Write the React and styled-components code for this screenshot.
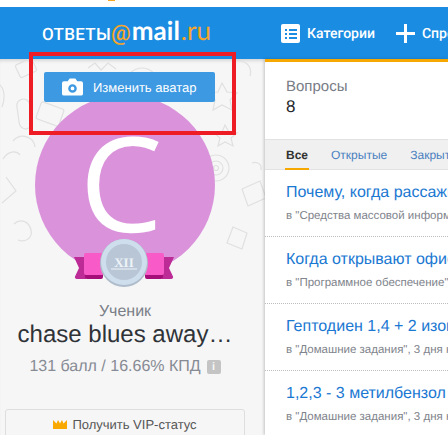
import React from "react";
import styled, { createGlobalStyle } from "styled-components";

const GlobalStyle = createGlobalStyle`
  html, body {
    margin: 0;
    padding: 0;
    background: #fff;
    overflow: hidden;
  }
  body {
    font-family: "Liberation Sans", Arial, sans-serif;
    text-rendering: geometricPrecision;
  }
`;

const questions = [
  { title: "Почему, когда рассаживают", meta: 'в "Средства массовой информации"' },
  { title: "Когда открывают офис", meta: 'в "Программное обеспечение", 3 дня' },
  { title: "Гептодиен 1,4 + 2 изомера", meta: 'в "Домашние задания", 3 дня назад' },
  { title: "1,2,3 - 3 метилбензол", meta: 'в "Домашние задания", 3 дня назад' },
];

function Doodles() {
  return (
    <DoodleLayer viewBox="0 0 265 376" fill="none" stroke="#e0e0e0" strokeWidth="1.2">
      <rect x="17" y="2" width="18" height="14" rx="2" transform="rotate(-25 26 9)" />
      <path d="M88 9l7-5 6 7 7-7 8 6" />
      <circle cx="142" cy="25" r="16" />
      <circle cx="142" cy="25" r="7" />
      <path d="M-3 24c7 3 9 13 5 24" />
      <rect x="18" y="40" width="13" height="30" rx="6.5" transform="rotate(-8 24 55)" />
      <rect x="38" y="46" width="24" height="18" rx="2" transform="rotate(20 50 55)" />
      <path d="M222 24l5 9 10 1-7 7 2 10-10-5-9 5 2-10-7-7 10-1z" />
      <path d="M225 66l4 7 8 1-6 5 2 8-8-4-7 4 2-8-6-5 8-1z" />
      <path d="M233 3c10-4 20 3 17 14" />
      <path d="M13 82c8-9 21-4 22 6M3 100c5-8 13-9 17-4" />
      <circle cx="216" cy="109" r="13" />
      <circle cx="216" cy="109" r="7" />
      <circle cx="216" cy="109" r="2.5" />
      <path d="M6 118l10 14-14 12" />
      <path d="M242 130l18-8 6 17-18 8z" />
      <path d="M252 104c6-2 10 2 9 7" />
      <path d="M14 165c6-6 15-3 17 6 2 8-6 13-13 10" />
      <path d="M233 168l14 6-5 16-15-6z" />
    </DoodleLayer>
  );
}

function Medal() {
  return (
    <MedalSvg viewBox="0 0 100 36" width="100" height="36">
      <path d="M0 5h12v22H3c-1.500 0-2.500-1-2-2.500L5 16z" fill="#bc2b96" />
      <path d="M100 5H88v22h9c1.500 0 2.500-1 2-2.500L95 16z" fill="#bc2b96" />
      <rect x="11" y="18" width="18" height="9" rx="2" fill="#a50e78" />
      <rect x="71" y="18" width="18" height="9" rx="2" fill="#a50e78" />
      <rect x="10" y="1" width="20" height="22" rx="2" fill="#f85bc7" />
      <rect x="70" y="1" width="20" height="22" rx="2" fill="#f85bc7" />
      <circle cx="50" cy="11" r="24" fill="#aebccc" />
      <circle cx="50" cy="10" r="23" fill="#cfdeec" />
      <circle cx="50" cy="10" r="18" fill="#b8c6d6" />
      <text x="50" y="15" textAnchor="middle" fontSize="13" fontWeight="700" fontFamily="Liberation Serif, serif" fill="#eef3f8">XII</text>
      <path d="M37 17h26" stroke="#eef3f8" strokeWidth="1" />
    </MedalSvg>
  );
}

export default function App() {
  return (
    <Page>
      <GlobalStyle />
      <TopStrip>
        <TopMark />
      </TopStrip>
      <Header>
        <Logo>
          <LogoWord>ОТВЕТЫ</LogoWord>
          <LogoAt>@</LogoAt>
          <LogoMail>mail</LogoMail>
          <LogoRu>.ru</LogoRu>
        </Logo>
        <NavItem>
          <svg width="19" height="19" viewBox="0 0 19 19">
            <rect width="19" height="19" rx="2" fill="#fff" />
            <path d="M4 5h2v2H4zM8 5h8v2H8zM4 9h2v2H4zM8 9h8v2H8zM4 13h2v2H4zM8 13h8v2H8z" fill="#1a8ce2" />
          </svg>
          <NavLabel>Категории</NavLabel>
        </NavItem>
        <NavItem>
          <svg width="19" height="19" viewBox="0 0 19 19">
            <path d="M8 0h3v8h8v3h-8v8H8v-8H0V8h8z" fill="#fff" />
          </svg>
          <NavLabel>Спросить</NavLabel>
        </NavItem>
      </Header>
      <Main>
        <Sidebar>
          <Doodles />
          <Avatar>
            <AvatarLetter>C</AvatarLetter>
            <Medal />
          </Avatar>
          <ChangeButton>
            <svg width="21" height="18" viewBox="0 0 22 18">
              <path
                fillRule="evenodd"
                d="M2 3h4l2-3h6l2 3h4a2 2 0 0 1 2 2v11a2 2 0 0 1-2 2H2a2 2 0 0 1-2-2V5a2 2 0 0 1 2-2zm9 3a4.500 4.500 0 1 0 0 9 4.500 4.500 0 0 0 0-9zm0 2.500a2 2 0 1 1 0 4 2 2 0 0 1 0-4z"
                fill="#fff"
              />
            </svg>
            Изменить аватар
          </ChangeButton>
          <Rank>Ученик</Rank>
          <UserName>chase blues away…</UserName>
          <Stats>
            131 балл / 16.66% КПД
            <InfoBadge>i</InfoBadge>
          </Stats>
          <VipBox>
            <svg width="14" height="10" viewBox="0 0 14 9" preserveAspectRatio="none">
              <path d="M0 1l3.500 3L5 1l2 3 2-3 1.500 3L14 1v8H0z" fill="#f9a800" />
            </svg>
            Получить VIP-статус
          </VipBox>
        </Sidebar>
        <Content>
          <Summary>
            <SummaryLabel>Вопросы</SummaryLabel>
            <SummaryValue>8</SummaryValue>
          </Summary>
          <Tabs>
            <Tab $active>Все</Tab>
            <Tab>Открытые</Tab>
            <Tab>Закрытые</Tab>
          </Tabs>
          <List>
            {questions.map((q) => (
              <Question key={q.title}>
                <QuestionTitle>{q.title}</QuestionTitle>
                <QuestionMeta>{q.meta}</QuestionMeta>
              </Question>
            ))}
          </List>
        </Content>
      </Main>
      <Annotation />
    </Page>
  );
}

const Page = styled.div`
  position: relative;
  width: 448px;
  height: 435px;
  overflow: hidden;
  background: #fff;
`;

const TopStrip = styled.div`
  height: 7px;
  background: #fff;
`;

const TopMark = styled.div`
  width: 7px;
  height: 1px;
  margin-left: 108px;
  background: #f5a623;
`;

const Header = styled.header`
  display: flex;
  align-items: center;
  height: 52px;
  padding-left: 42px;
  background: #1a8ce2;
  color: #fff;
  white-space: nowrap;
`;

const Logo = styled.div`
  display: flex;
  align-items: baseline;
  flex: none;
  width: 239px;
  margin-top: -1px;
  font-family: "Roboto", sans-serif;
`;

const LogoWord = styled.span`
  font-size: 17px;
  font-weight: 500;
  letter-spacing: 0.3px;
`;

const LogoAt = styled.span`
  font-size: 22px;
  line-height: 20px;
  font-weight: 500;
  color: #f6a52b;
`;

const LogoMail = styled.span`
  margin-left: 1px;
  font-family: "Lato", sans-serif;
  font-size: 26px;
  line-height: 20px;
  font-weight: 700;
`;

const LogoRu = styled.span`
  margin-left: 1px;
  font-family: "Lato", sans-serif;
  font-size: 26px;
  line-height: 20px;
  color: #f6a52b;
`;

const NavItem = styled.div`
  display: flex;
  align-items: center;
  gap: 7px;
  margin-right: 21px;
  font-family: "Roboto", sans-serif;
  font-size: 14px;
  font-weight: 500;
`;

const NavLabel = styled.span`
  padding-top: 2px;
`;

const Main = styled.div`
  display: flex;
  height: 376px;
`;

const Sidebar = styled.aside`
  position: relative;
  display: flex;
  flex-direction: column;
  align-items: center;
  flex: none;
  box-sizing: border-box;
  width: 265px;
  padding: 36px 15px 0 0;
  overflow: hidden;
  background: #f6f6f6;
  box-shadow: inset 0 4px 4px -3px rgba(0, 0, 0, 0.18);
`;

const DoodleLayer = styled.svg`
  position: absolute;
  top: 0;
  left: 0;
  width: 265px;
  height: 376px;
`;

const Avatar = styled.div`
  position: relative;
  flex: none;
  display: flex;
  justify-content: center;
  width: 180px;
  height: 180px;
  border-radius: 50%;
  background: #da93db;
`;

const AvatarLetter = styled.span`
  margin-right: 8px;
  color: #fff;
  font-family: "Open Sans", sans-serif;
  font-size: 132px;
  line-height: 172px;
`;

const MedalSvg = styled.svg`
  position: absolute;
  top: 157px;
  left: 39px;
  overflow: visible;
`;

const ChangeButton = styled.div`
  position: absolute;
  top: 13px;
  left: 44px;
  display: flex;
  align-items: center;
  gap: 10px;
  box-sizing: border-box;
  width: 171px;
  height: 30px;
  padding-left: 18px;
  border-radius: 2px;
  background: #3c99e2;
  color: #fff;
  font-size: 13px;
`;

const Rank = styled.div`
  margin-top: 28px;
  color: #7a7f87;
  font-size: 16px;
  line-height: 18px;
`;

const UserName = styled.div`
  color: #2f3338;
  font-size: 24px;
  line-height: 28px;
  white-space: nowrap;
`;

const Stats = styled.div`
  display: flex;
  align-items: center;
  gap: 6px;
  margin-top: 9px;
  color: #868b94;
  font-size: 16px;
  line-height: 18px;
`;

const InfoBadge = styled.span`
  width: 14px;
  height: 14px;
  border-radius: 2px;
  background: #c4c4c4;
  color: #f6f6f6;
  font-size: 11px;
  font-weight: 700;
  line-height: 14px;
  text-align: center;
`;

const VipBox = styled.div`
  display: flex;
  align-items: center;
  justify-content: center;
  gap: 5px;
  flex: none;
  box-sizing: border-box;
  width: 240px;
  height: 40px;
  margin-top: 33px;
  padding-bottom: 10px;
  border: 1px solid #dedede;
  border-radius: 3px;
  color: #555;
  font-size: 13px;
`;

const Content = styled.main`
  flex: 1;
  min-width: 0;
  overflow: hidden;
  border-top: 3px solid #f7a800;
  background: #fff;
  box-shadow: -1px 0 3px rgba(0, 0, 0, 0.2);
  z-index: 1;
`;

const Summary = styled.section`
  box-sizing: border-box;
  height: 77px;
  padding: 17px 21px 0;
`;

const SummaryLabel = styled.div`
  color: #777c85;
  font-size: 15px;
  line-height: 16px;
`;

const SummaryValue = styled.div`
  margin-top: 2px;
  color: #26292e;
  font-size: 17px;
  line-height: 20px;
`;

const Tabs = styled.nav`
  display: flex;
  gap: 21px;
  box-sizing: border-box;
  height: 31px;
  padding-left: 20px;
  border-top: 1px solid #e2e2e2;
  border-bottom: 1px solid #e2e2e2;
  background: #f0f0f0;
  white-space: nowrap;
`;

const Tab = styled.span`
  box-sizing: border-box;
  height: 30px;
  padding: 8px 1px 0;
  border-bottom: ${(p) => (p.$active ? "2px solid #f7a800" : "none")};
  color: ${(p) => (p.$active ? "#333" : "#4a80c0")};
  font-size: 12px;
  font-weight: ${(p) => (p.$active ? 700 : 400)};
`;

const List = styled.div`
  display: flex;
  flex-direction: column;
`;

const Question = styled.article`
  box-sizing: border-box;
  height: 67px;
  padding: 13px 21px 0;
  border-bottom: 1px dotted #bdbdbd;
  white-space: nowrap;
  &:last-child {
    border-bottom: none;
  }
`;

const QuestionTitle = styled.div`
  color: #1a78d2;
  font-size: 16px;
  line-height: 20px;
`;

const QuestionMeta = styled.div`
  margin-top: 7px;
  color: #80848c;
  font-size: 11.5px;
  line-height: 13px;
`;

const Annotation = styled.div`
  position: absolute;
  top: 52px;
  left: 29px;
  box-sizing: border-box;
  width: 207px;
  height: 83px;
  border: 4px solid #ee1c25;
  pointer-events: none;
`;
